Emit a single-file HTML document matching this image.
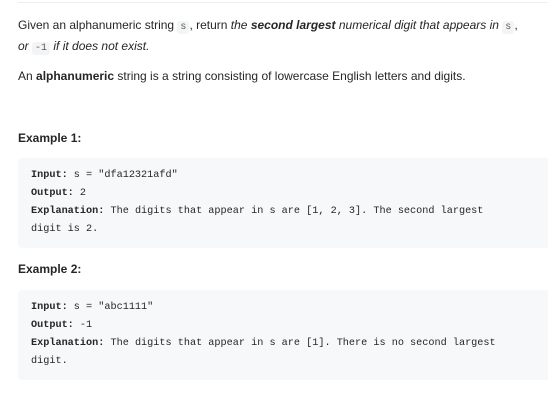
<!DOCTYPE html>
<html><head><meta charset="utf-8"><style>
body{margin:0;width:548px;height:404px;background:#fff;overflow:hidden;font-family:"Liberation Sans",sans-serif;color:#262626;}
.top{position:absolute;left:18px;right:0;top:2px;height:1px;background:#eee;}
p{position:absolute;left:18px;margin:0;font-size:12px;line-height:19px;}
code{font-family:"Liberation Mono",monospace;font-size:10px;background:#f3f4f5;border-radius:3px;padding:1px 3px;color:#5c5c5c;}
h4{position:absolute;left:18px;margin:0;font-size:12px;font-weight:bold;}
pre{position:absolute;left:18px;right:0;margin:0;background:#f7f8fa;border-radius:4px 0 0 4px;padding:9px 13px;font-family:"Liberation Mono",monospace;font-size:10.2px;line-height:18px;color:#262626;}
b{font-weight:bold;}
</style></head><body>
<div class="top"></div>
<p style="top:16px">Given an alphanumeric string <code>s</code>, return <i>the <b>second largest</b> numerical digit that appears in</i> <code>s</code>,<br><i>or</i> <code>-1</code> <i>if it does not exist.</i></p>
<p style="top:67px">An <b>alphanumeric</b> string is a string consisting of lowercase English letters and digits.</p>
<h4 style="top:131px">Example 1:</h4>
<pre style="top:158px"><b>Input:</b> s = "dfa12321afd"
<b>Output:</b> 2
<b>Explanation:</b> The digits that appear in s are [1, 2, 3]. The second largest
digit is 2.</pre>
<h4 style="top:262px">Example 2:</h4>
<pre style="top:290px"><b>Input:</b> s = "abc1111"
<b>Output:</b> -1
<b>Explanation:</b> The digits that appear in s are [1]. There is no second largest
digit.</pre>
</body></html>
